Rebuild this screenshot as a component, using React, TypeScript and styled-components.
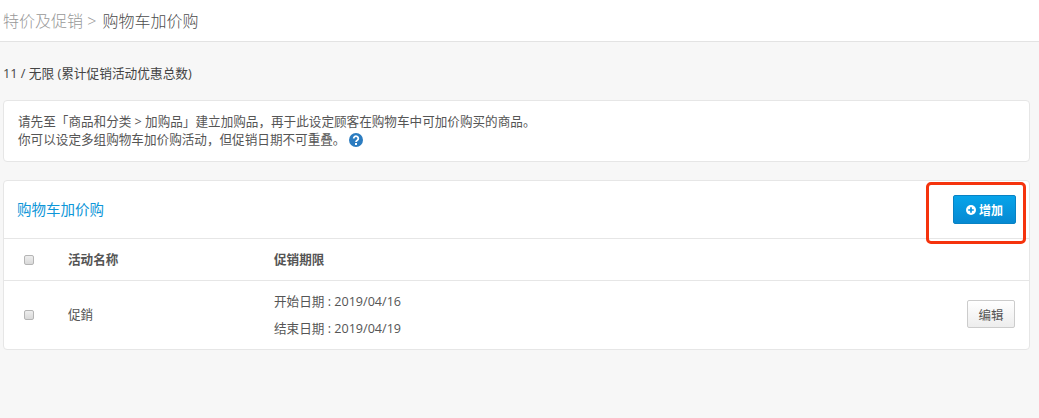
import React from "react";
import styled, { createGlobalStyle } from "styled-components";

const Global = createGlobalStyle`
  html, body { margin: 0; padding: 0; background: #f7f7f7; }
  body { font-family: "Open Sans", "Noto Sans CJK SC", sans-serif; color: #555; overflow: hidden; }
  * { box-sizing: border-box; }
`;

const Page = styled.div`
  width: 1039px;
  height: 418px;
  background: #f7f7f7;
`;

const TopBar = styled.header`
  height: 42px;
  background: #fff;
  border-bottom: 1px solid #e3e3e3;
  padding: 0 3px;
  display: flex;
  align-items: center;
  font-size: 16px;
  font-weight: 300;
  line-height: 42px;
  color: #4c4c4c;
`;

const Crumb = styled.span`
  color: #989898;
  white-space: pre;
  margin-right: 2px;
`;

const Main = styled.main`
  padding: 0 9px 0 3px;
`;

const Quota = styled.div`
  margin-top: 23px;
  height: 17px;
  font-size: 12.7px;
  line-height: 16px;
  color: #444;
`;

const Card = styled.section`
  background: #fff;
  border: 1px solid #e6e6e6;
  border-radius: 4px;
  position: relative;
`;

const Notice = styled(Card)`
  margin-top: 18px;
  height: 62px;
  padding: 12px 14px;
  font-size: 12.6px;
  line-height: 18px;
  color: #555;
`;

const HelpIcon = styled.svg`
  width: 14px;
  height: 14px;
  margin-left: 4px;
  vertical-align: -3px;
`;

const PromoCard = styled(Card)`
  margin-top: 18px;
  height: 170px;
`;

const CardHead = styled.div`
  height: 57px;
  padding: 0 13px 0 13px;
  display: flex;
  align-items: center;
  justify-content: space-between;
`;

const CardTitle = styled.h2`
  margin: -2px 0 0;
  font-size: 14.5px;
  font-weight: 400;
  color: #0d96d8;
`;

const AddButton = styled.button`
  width: 63px;
  height: 29px;
  padding: 0;
  display: flex;
  align-items: center;
  justify-content: center;
  gap: 3px;
  font: 700 12px "Open Sans", "Noto Sans CJK SC", sans-serif;
  color: #fff;
  border: 1px solid #0882c4;
  border-radius: 2px;
  background: linear-gradient(#07a4ea, #0689d2);
`;

const EditButton = styled.button`
  width: 48px;
  height: 28px;
  padding: 0;
  margin-top: -2px;
  font: 400 12.5px "Open Sans", "Noto Sans CJK SC", sans-serif;
  color: #555;
  border: 1px solid #ccc;
  border-radius: 2px;
  background: linear-gradient(#fff, #ededed);
`;

const Row = styled.div<{ $head?: boolean }>`
  display: grid;
  grid-template-columns: 64px 206px 1fr auto;
  align-items: center;
  border-top: 1px solid #e6e6e6;
  height: ${(p) => (p.$head ? "42px" : "69px")};
  padding-right: 14px;
  font-size: 12.6px;
  font-weight: ${(p) => (p.$head ? 700 : 400)};
  color: #555;
`;

const Box = styled.span`
  justify-self: start;
  margin-left: 20px;
  width: 10px;
  height: 10px;
  border: 1px solid #b5b5b5;
  border-radius: 2px;
  background: linear-gradient(#eee, #d9d9d9);
`;

const Label = styled.span`
  margin-top: -3px;
`;

const Dates = styled.div`
  display: flex;
  flex-direction: column;
  gap: 9px;
  line-height: 18px;
`;

const Annotation = styled.div`
  position: absolute;
  left: 922px;
  top: 1px;
  width: 100px;
  height: 62px;
  border: 3px solid #f5330d;
  border-radius: 5px;
  pointer-events: none;
`;

export default function App() {
  return (
    <Page>
      <Global />
      <TopBar>
        <Crumb>特价及促销 &gt; </Crumb>
        <span>购物车加价购</span>
      </TopBar>
      <Main>
        <Quota>11 / 无限 (累计促销活动优惠总数)</Quota>
        <Notice>
          请先至「商品和分类 &gt; 加购品」建立加购品，再于此设定顾客在购物车中可加价购买的商品。
          <br />
          你可以设定多组购物车加价购活动，但促销日期不可重叠。
          <HelpIcon viewBox="0 0 14 14">
            <circle cx="7" cy="7" r="7" fill="#2b7cc0" />
            <path d="M4.7 5.4a2.3 2.2 0 1 1 3.6 1.8c-.8.5-1.3.9-1.3 1.8" fill="none" stroke="#fff" strokeWidth="1.8" />
            <rect x="6" y="10" width="2" height="2" fill="#fff" />
          </HelpIcon>
        </Notice>
        <PromoCard>
          <CardHead>
            <CardTitle>购物车加价购</CardTitle>
            <AddButton>
              <svg width="10" height="10" viewBox="0 0 10 10">
                <circle cx="5" cy="5" r="5" fill="#fff" />
                <path d="M2.2 5h5.6M5 2.2v5.6" stroke="#0793dc" strokeWidth="1.7" />
              </svg>
              增加
            </AddButton>
          </CardHead>
          <Row $head>
            <Box />
            <Label>活动名称</Label>
            <Label>促销期限</Label>
          </Row>
          <Row>
            <Box />
            <Label>促銷</Label>
            <Dates>
              <span>开始日期 : 2019/04/16</span>
              <span>结束日期 : 2019/04/19</span>
            </Dates>
            <EditButton>编辑</EditButton>
          </Row>
          <Annotation />
        </PromoCard>
      </Main>
    </Page>
  );
}
